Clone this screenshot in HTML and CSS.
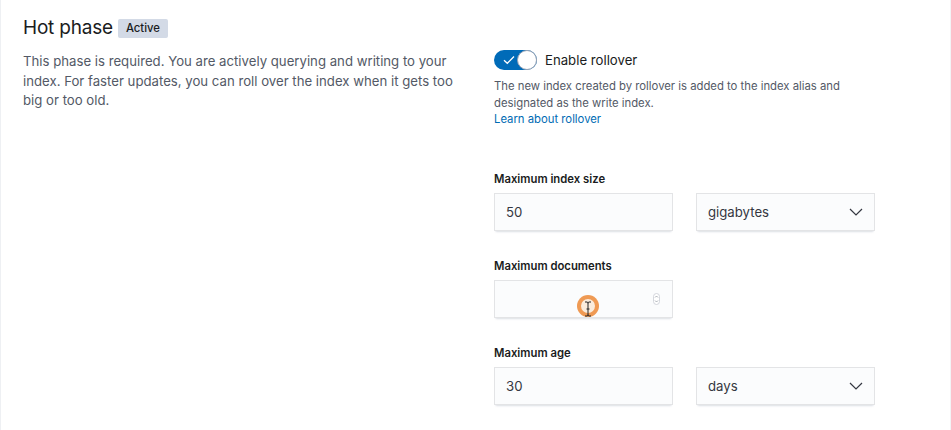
FILE: index.html
```html
<!DOCTYPE html>
<html>
<head>
<meta charset="utf-8">
<link rel="stylesheet" href="styles.css">
</head>
<body>
<div class="page">
  <div class="left">
    <h2 class="title">Hot phase <span class="badge">Active</span></h2>
    <p class="desc">This phase is required. You are actively querying and writing to your index. For faster updates, you can roll over the index when it gets too big or too old.</p>
  </div>
  <div class="right">
    <div class="switch-row">
      <span class="switch">
        <svg class="check" width="12" height="10" viewBox="0 0 12 10"><path d="M1 5.2 L4.3 8.3 L11 1.5" fill="none" stroke="#fff" stroke-width="1.3"/></svg>
        <span class="knob"></span>
      </span>
      <span class="switch-label">Enable rollover</span>
    </div>
    <p class="help">The new index created by rollover is added to the index alias and designated as the write index.<br><a class="link" href="#">Learn about rollover</a></p>

    <div class="fields">
      <div class="field">
        <div class="label">Maximum index size</div>
        <div class="pair">
          <div class="input">50</div>
          <div class="input select">gigabytes
            <svg class="chev" width="14" height="8" viewBox="0 0 14 8"><path d="M1 1 L7 7 L13 1" fill="none" stroke="#343741" stroke-width="1.2"/></svg>
          </div>
        </div>
      </div>
      <div class="field">
        <div class="label">Maximum documents</div>
        <div class="pair">
          <div class="input num">
            <svg class="spin" width="7" height="12" viewBox="0 0 7 12"><rect x="0.5" y="0.5" width="6" height="11" rx="3" fill="#fff" stroke="#c9cdd4" stroke-width="0.8"/><path d="M2 4.5 L3.5 3 L5 4.5 M2 7.5 L3.5 9 L5 7.5" fill="none" stroke="#8a909b" stroke-width="0.7"/></svg>
            <span class="cursor">
              <svg width="8" height="16" viewBox="0 0 8 16"><path d="M1 1 H3 Q4 1 4 2.5 V13.5 Q4 15 3 15 H1 M7 1 H5 Q4 1 4 2.5 M4 13.5 Q4 15 5 15 H7 M2.5 8 H5.5" fill="none" stroke="#222" stroke-width="1"/></svg>
            </span>
          </div>
        </div>
      </div>
      <div class="field">
        <div class="label">Maximum age</div>
        <div class="pair">
          <div class="input">30</div>
          <div class="input select">days
            <svg class="chev" width="14" height="8" viewBox="0 0 14 8"><path d="M1 1 L7 7 L13 1" fill="none" stroke="#343741" stroke-width="1.2"/></svg>
          </div>
        </div>
      </div>
    </div>
  </div>
</div>
</body>
</html>
```
FILE: styles.css
```css
html, body {
  margin: 0;
  padding: 0;
  background: #fff;
}
body {
  font-family: Inter, "Noto Sans", sans-serif;
  color: #1a1c21;
  width: 951px;
  height: 430px;
  overflow: hidden;
  box-sizing: border-box;
  border-left: 1px solid #eef0f3;
  border-right: 1px solid #f3f4f6;
}
.page {
  display: grid;
  grid-template-columns: 448px 1fr;
  gap: 0 23px;
  padding: 16px 0 0 22px;
}
.title {
  margin: 0;
  font-size: 19px;
  line-height: 24px;
  font-weight: 400;
  display: flex;
  align-items: center;
  gap: 5px;
  letter-spacing: -0.2px;
}
.badge {
  font-size: 11.3px;
  line-height: 19px;
  font-weight: 500;
  background: #d3dae6;
  color: #1a1c21;
  padding: 0 8px;
  border-radius: 2px;
  letter-spacing: 0;
}
.desc {
  margin: 12px 0 0;
  font-size: 13.2px;
  line-height: 19.5px;
  color: #535966;
  max-width: 430px;
}
.right {
  padding-top: 34px;
}
.switch-row {
  display: flex;
  align-items: center;
  gap: 8px;
  height: 20px;
}
.switch {
  position: relative;
  width: 43px;
  height: 20px;
  border-radius: 10px;
  background: #006bb8;
  display: inline-block;
}
.check {
  position: absolute;
  left: 9px;
  top: 5px;
}
.knob {
  position: absolute;
  right: 0;
  top: 0;
  width: 18px;
  height: 18px;
  border-radius: 50%;
  background: #fff;
  border: 1px solid #98a2b3;
}
.switch-label {
  font-size: 13.2px;
  color: #1a1c21;
}
.help {
  margin: 8px 0 0;
  font-size: 11.3px;
  line-height: 16.5px;
  color: #535966;
  max-width: 360px;
}
.link {
  color: #006bb4;
  text-decoration: none;
}
.fields {
  margin-top: 42px;
  display: flex;
  flex-direction: column;
  gap: 26px;
}
.label {
  font-size: 11.3px;
  line-height: 18px;
  font-weight: 600;
  color: #1a1c21;
  margin-bottom: 5px;
}
.pair {
  display: flex;
  gap: 23px;
}
.input {
  position: relative;
  width: 179px;
  height: 38px;
  box-sizing: border-box;
  padding: 0 12px;
  display: flex;
  align-items: center;
  font-size: 13.2px;
  color: #343741;
  background: #fbfcfd;
  box-shadow: 0 1px 1px -1px rgba(152,162,179,.3), 0 3px 2px -2px rgba(152,162,179,.3), inset 0 0 0 1px rgba(16,22,26,.1);
}
.select {
  justify-content: space-between;
}
.chev {
  margin-right: 0;
}
.spin {
  position: absolute;
  right: 13px;
  top: 13px;
}
.cursor {
  position: absolute;
  left: 83px;
  top: 15px;
  width: 14px;
  height: 14px;
  border-radius: 50%;
  border: 4px solid rgba(236, 140, 60, 0.85);
  background: rgba(250, 220, 190, 0.5);
  display: flex;
  align-items: center;
  justify-content: center;
}
.cursor svg {
  margin-top: 7px;
}
```
